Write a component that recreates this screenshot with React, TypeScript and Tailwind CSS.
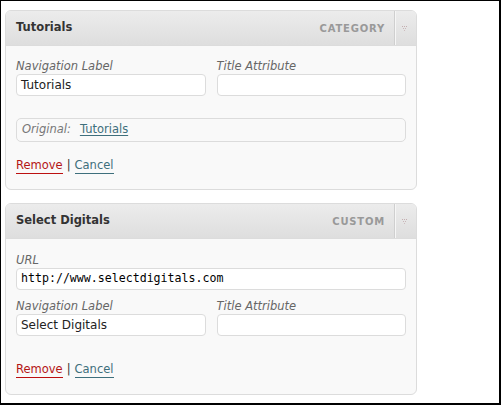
import React from "react";

const font = { fontFamily: '"DejaVu Sans", Verdana, sans-serif' };

function Arrow() {
  return (
    <svg width="7" height="5" viewBox="0 0 7 5">
      <rect x="0" y="0" width="1" height="1" fill="#c4aeb0" />
      <rect x="2" y="0" width="1" height="1" fill="#c4aeb0" />
      <rect x="4" y="0" width="1" height="1" fill="#c4aeb0" />
      <rect x="1" y="2" width="1" height="1" fill="#c9b6b8" />
      <rect x="3" y="2" width="1" height="1" fill="#c9b6b8" />
      <rect x="2" y="4" width="1" height="1" fill="#cdbcbe" />
    </svg>
  );
}

function Header({ title, kind }: { title: string; kind: string }) {
  return (
    <div className="flex h-[35px] items-stretch rounded-t-[5px] border-b border-[#dcdcdc] bg-gradient-to-b from-[#ececec] to-[#dedede]">
      <div className="flex flex-1 items-center pl-[10px] text-[11.5px] font-bold text-[#333]">{title}</div>
      <div className="flex items-center pr-[9px] text-[10px] font-bold tracking-[0.8px] text-[#999]">{kind}</div>
      <div className="flex w-[22px] items-center justify-center border-l border-[#cfcfcf] shadow-[inset_1px_0_0_#f6f6f6]">
        <Arrow />
      </div>
    </div>
  );
}

function Field({ label, value, mono }: { label: string; value?: string; mono?: boolean }) {
  return (
    <div className="flex flex-1 flex-col">
      <div className="h-[15px] text-[11.5px] italic leading-[15px] text-[#666]">{label}</div>
      <div
        className={`flex h-[22px] items-center rounded-[4px] border border-[#dcdcdc] bg-white pl-[4px] ${
          mono ? "text-[11.6px] text-black" : "text-[12px] text-[#222]"
        }`}
        style={mono ? { fontFamily: '"DejaVu Sans Mono", monospace' } : undefined}
      >
        {value}
      </div>
    </div>
  );
}

function Actions() {
  return (
    <div className="flex items-start text-[11.5px] leading-[15px]">
      <span className="border-b border-[#bc1010] text-[#b41515]">Remove</span>
      <span className="mx-[4px] text-[#333]">|</span>
      <span className="border-b border-[#3e6f7c] text-[#3e6f7c]">Cancel</span>
    </div>
  );
}

export default function App() {
  return (
    <div
      className="h-[405px] w-[501px] border-t border-l border-r-2 border-b-2 border-black bg-white pl-[4px] pt-[9px]"
      style={font}
    >
      <div className="w-[412px] rounded-[6px] border border-[#dcdcdc] bg-[#f9f9f9]">
        <Header title="Tutorials" kind="CATEGORY" />
        <div className="px-[10px] pb-[15px] pt-[13px]">
          <div className="flex gap-[11px]">
            <Field label="Navigation Label" value="Tutorials" />
            <Field label="Title Attribute" />
          </div>
          <div className="mt-[22px] flex h-[24px] items-center rounded-[5px] border border-[#dcdcdc] bg-[#f9f9f9] pl-[5px] text-[11.5px]">
            <span className="italic text-[#777]">Original:</span>
            <span className="ml-[9px] text-[#3e6f7c] underline underline-offset-2">Tutorials</span>
          </div>
          <div className="mt-[16px]">
            <Actions />
          </div>
        </div>
      </div>

      <div className="mt-[13px] w-[412px] rounded-[6px] border border-[#dcdcdc] bg-[#f9f9f9]">
        <Header title="Select Digitals" kind="CUSTOM" />
        <div className="px-[10px] pb-[16px] pt-[14px]">
          <Field label="URL" value="http://www.selectdigitals.com" mono />
          <div className="mt-[9px] flex gap-[11px]">
            <Field label="Navigation Label" value="Select Digitals" />
            <Field label="Title Attribute" />
          </div>
          <div className="mt-[26px]">
            <Actions />
          </div>
        </div>
      </div>
    </div>
  );
}
